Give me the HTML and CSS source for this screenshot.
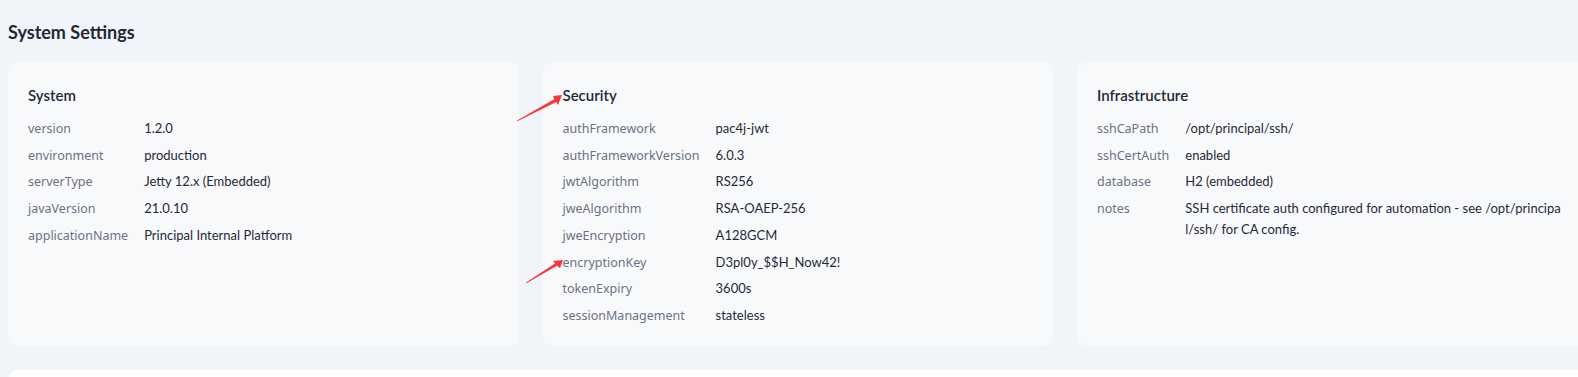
FILE: index.html
```html
<!DOCTYPE html>
<html lang="en">
<head>
    <meta charset="UTF-8">
    <meta name="viewport" content="width=device-width, initial-scale=1.0">
    <title>System Settings</title>
    <link rel="stylesheet" href="styles.css">
</head>
<body>
    <main class="page">
        <h2 class="page-title">System Settings</h2>
        <div class="card-grid">
            <section class="card">
                <h3>System</h3>
                <table class="props">
                    <tr><td class="key">version</td><td class="val">1.2.0</td></tr>
                    <tr><td class="key">environment</td><td class="val">production</td></tr>
                    <tr><td class="key">serverType</td><td class="val">Jetty 12.x (Embedded)</td></tr>
                    <tr><td class="key">javaVersion</td><td class="val">21.0.10</td></tr>
                    <tr><td class="key">applicationName</td><td class="val">Principal Internal Platform</td></tr>
                </table>
            </section>
            <section class="card">
                <h3>Security</h3>
                <table class="props">
                    <tr><td class="key">authFramework</td><td class="val">pac4j-jwt</td></tr>
                    <tr><td class="key">authFrameworkVersion</td><td class="val">6.0.3</td></tr>
                    <tr><td class="key">jwtAlgorithm</td><td class="val">RS256</td></tr>
                    <tr><td class="key">jweAlgorithm</td><td class="val">RSA-OAEP-256</td></tr>
                    <tr><td class="key">jweEncryption</td><td class="val">A128GCM</td></tr>
                    <tr><td class="key">encryptionKey</td><td class="val">D3pl0y_$$H_Now42!</td></tr>
                    <tr><td class="key">tokenExpiry</td><td class="val">3600s</td></tr>
                    <tr><td class="key">sessionManagement</td><td class="val">stateless</td></tr>
                </table>
            </section>
            <section class="card">
                <h3>Infrastructure</h3>
                <table class="props">
                    <tr><td class="key">sshCaPath</td><td class="val">/opt/principal/ssh/</td></tr>
                    <tr><td class="key">sshCertAuth</td><td class="val">enabled</td></tr>
                    <tr><td class="key">database</td><td class="val">H2 (embedded)</td></tr>
                    <tr><td class="key">notes</td><td class="val">SSH certificate auth configured for automation - see /opt/principal/ssh/ for CA config.</td></tr>
                </table>
            </section>
        </div>
        <section class="card card-white"></section>
    </main>

    <!-- screenshot annotations -->
    <svg class="mark mark-one" width="56" height="36" viewBox="0 0 56 36">
        <path d="M7 32.6 L44.2 11.2 L43 8 L52 7 L48 17 L46.2 14 L7.4 33.2 Z" fill="#f4393b"/>
    </svg>
    <svg class="mark mark-two" width="48" height="34" viewBox="0 0 48 34">
        <path d="M6 28.6 L35 9.6 L33 7 L43 6 L40 14 L37 11.8 L6.4 29.2 Z" fill="#f4393b"/>
    </svg>
</body>
</html>
```
FILE: styles.css
```css
html,
body {
    height: 100%;
    overflow: hidden;
}

body {
    font-family: Lato, "Noto Sans", sans-serif;
    margin: 0;
    padding: 0;
    background-color: #f1f4f8;
    color: #1f2937;
}

.page {
    padding: 20px 0 0 8px;
}

.page-title {
    font-size: 18px;
    font-weight: 700;
    line-height: 24px;
    margin: 0 0 18px 0;
}

.card-grid {
    display: grid;
    grid-template-columns: repeat(3, 510.5px);
    gap: 24px;
    margin-bottom: 24px;
}

.card {
    background-color: #f8f9fb;
    border-radius: 10px;
    padding: 23px 20px 17px 20px;
}

.card h3 {
    font-size: 15px;
    font-weight: 600;
    line-height: 20px;
    margin: 0 0 10px 0;
}

.card-white {
    background-color: #ffffff;
    width: 1580px;
    height: 60px;
    padding: 0;
}

.props {
    border-collapse: collapse;
    font-size: 13px;
    line-height: 20.7px;
}

.props td {
    padding: 3px 0;
    vertical-align: top;
}

.props .key {
    font-family: "Noto Sans", sans-serif;
    font-size: 12.5px;
    color: #6b7280;
    padding: 4px 16px 2px 0;
    white-space: nowrap;
}

.props .val {
    color: #1f2937;
    word-break: break-all;
}

.mark {
    position: absolute;
}

.mark-one {
    left: 510px;
    top: 88px;
}

.mark-two {
    left: 520px;
    top: 254px;
}
```
